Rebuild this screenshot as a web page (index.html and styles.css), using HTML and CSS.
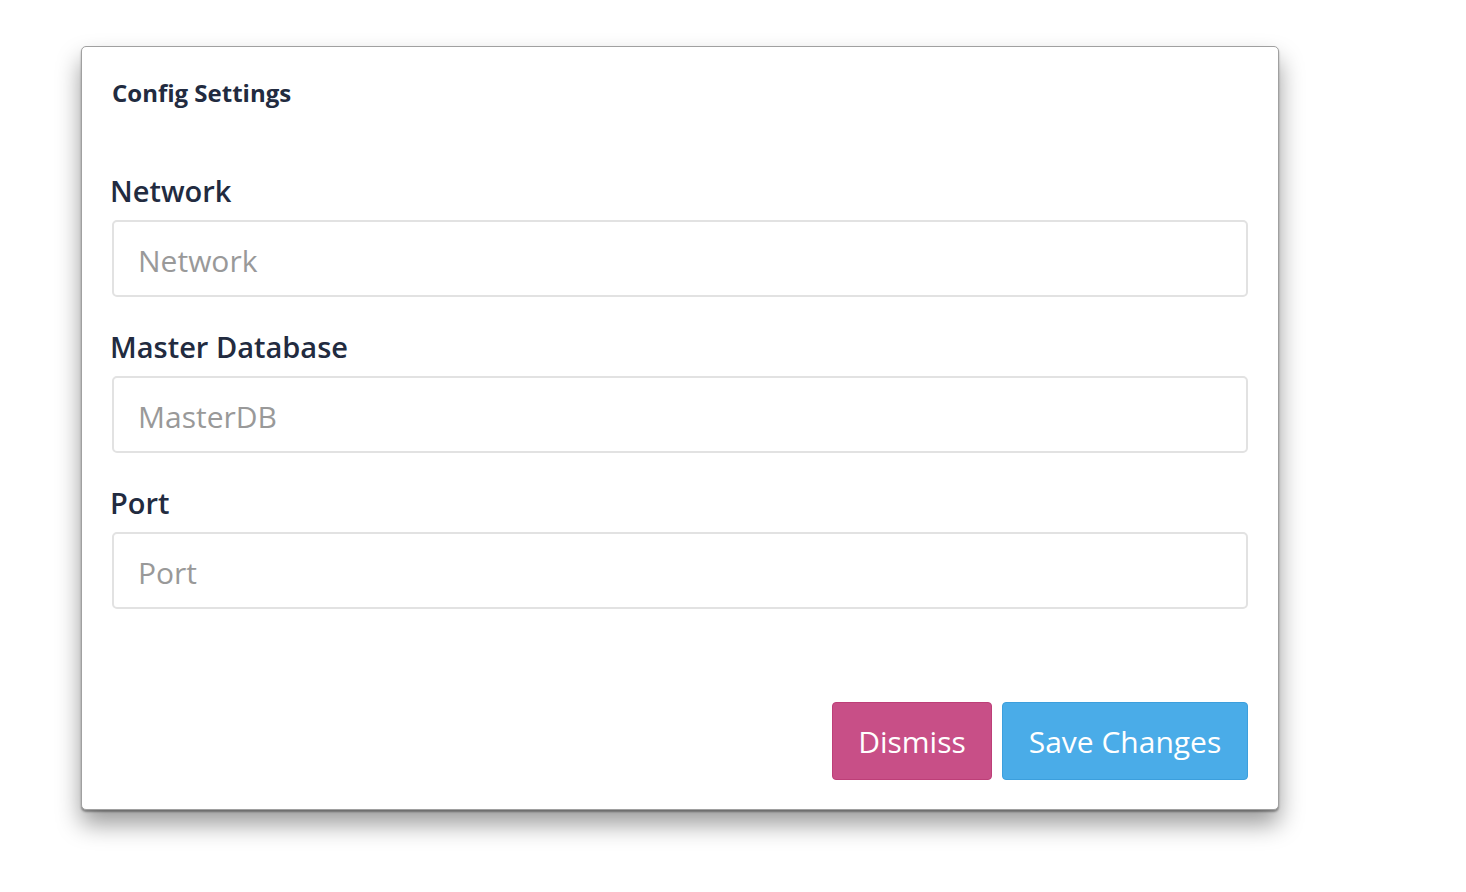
FILE: index.html
```html
<!DOCTYPE html>
<html>
<head>
<meta charset="utf-8">
<link rel="stylesheet" href="styles.css">
</head>
<body>
<div class="page">
  <div class="card">
    <h1 class="title">Config Settings</h1>
    <form class="form">
      <div class="group">
        <label class="label">Network</label>
        <input class="input" type="text" placeholder="Network">
      </div>
      <div class="group">
        <label class="label">Master Database</label>
        <input class="input" type="text" placeholder="MasterDB">
      </div>
      <div class="group">
        <label class="label">Port</label>
        <input class="input" type="text" placeholder="Port">
      </div>
      <div class="actions">
        <button type="button" class="btn btn-dismiss">Dismiss</button>
        <button type="button" class="btn btn-save">Save Changes</button>
      </div>
    </form>
  </div>
</div>
</body>
</html>
```
FILE: styles.css
```css
* { box-sizing: border-box; }
html, body { margin: 0; padding: 0; background: #fff; }
body { font-family: "Open Sans", "Noto Sans", sans-serif; color: #222b40; }
.page { padding: 46px 0 82px 81px; min-height: 892px; }
.card {
  width: 1198px;
  height: 764px;
  background: #fff;
  border: 1px solid #a0a0a0;
  border-radius: 5px;
  box-shadow: 0 2px 2px rgba(0,0,0,0.35), 0 14px 24px rgba(0,0,0,0.4);
  padding: 28px 30px 29px 30px;
  display: flex;
  flex-direction: column;
}
.title {
  margin: 0;
  font-size: 24px;
  font-weight: 700;
  line-height: 36px;
  color: #222b40;
}
.form { display: flex; flex-direction: column; flex: 1; margin-top: 65px; }
.group { display: flex; flex-direction: column; margin-bottom: 35px; }
.label {
  font-size: 29px;
  font-weight: 600;
  line-height: 30px;
  margin-bottom: 14px;
  margin-left: -2px;
  color: #222b40;
}
.input {
  height: 77px;
  border: 2px solid #e2e2e2;
  border-radius: 5px;
  padding: 3px 24px 0;
  font-family: inherit;
  font-size: 30px;
  color: #333;
  outline: none;
}
.input::placeholder { color: #999; }
.actions {
  margin-top: auto;
  display: flex;
  justify-content: flex-end;
  gap: 10px;
}
.btn {
  height: 78px;
  border-radius: 4px;
  font-family: inherit;
  font-size: 30px;
  color: #fff;
  padding: 0;
  cursor: pointer;
}
.btn-dismiss { background: #c84f87; border: 1px solid #bd3f78; width: 160px; }
.btn-save { background: #4aace8; border: 1px solid #3c9fdd; width: 246px; }
```
